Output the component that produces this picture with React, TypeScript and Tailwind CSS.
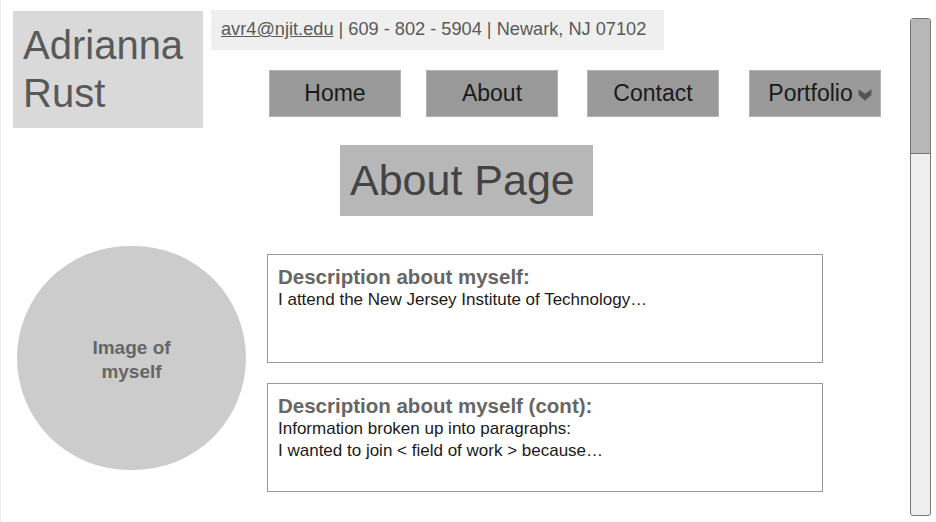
import React from "react";

const navItems = [
  { label: "Home", gap: "" },
  { label: "About", gap: "ml-[25px]" },
  { label: "Contact", gap: "ml-[29px]" },
  { label: "Portfolio", gap: "ml-[30px]" },
];

const NavButton: React.FC<{ label: string; gap: string }> = ({ label, gap }) => (
  <div
    className={`flex h-[47px] w-[132px] items-center justify-center border border-[#b3b3b3] bg-[#999999] text-[23px] text-[#1a1a1a] ${gap}`}
  >
    <span className={label === "Portfolio" ? "ml-[10px]" : ""}>{label}</span>
    {label === "Portfolio" && (
      <svg width="14" height="14" viewBox="0 0 12 12" className="ml-[5px] mt-[3px]">
        {/* thick down chevron */}
        <path d="M0.5 1 L6 5 L11.5 1 L11.5 6 L6 11 L0.5 6 Z" fill="#555555" />
      </svg>
    )}
  </div>
);

const InfoBox: React.FC<{ title: string; lines: string[] }> = ({ title, lines }) => (
  <div className="h-[109px] w-[556px] border border-[#999999] px-[10px] pt-[10px]">
    <h2 className="text-[20.5px] font-bold leading-[24px] text-[#666666]">{title}</h2>
    {lines.map((line) => (
      <p key={line} className="text-[17px] leading-[22px] text-[#1a1a1a]">
        {line}
      </p>
    ))}
  </div>
);

const App: React.FC = () => {
  return (
    <div
      className="flex h-[522px] w-[936px] overflow-hidden border-l border-[#eeeeee] bg-white"
      style={{ fontFamily: '"Liberation Sans", Arial, sans-serif' }}
    >
      <div className="flex-1">
        {/* Header */}
        <div className="flex items-start">
          <div className="ml-[12px] mt-[11px] h-[117px] w-[190px] bg-[#d9d9d9] px-[10px] pt-[10px] text-[40px] leading-[48px] text-[#595959]">
            Adrianna
            <br />
            Rust
          </div>
          <div className="ml-[8px] mt-[10px] flex flex-col">
            <div className="flex h-[40px] w-[453px] items-center bg-[#efefef] px-[10px] text-[18.2px] text-[#595959]">
              <span className="underline">avr4@njit.edu</span>
              <span className="whitespace-pre"> | 609 - 802 - 5904 | Newark, NJ 07102</span>
            </div>
            <div className="ml-[58px] mt-[20px] flex">
              {navItems.map((item) => (
                <NavButton key={item.label} label={item.label} gap={item.gap} />
              ))}
            </div>
          </div>
        </div>

        {/* Title */}
        <div className="ml-[339px] mt-[17px] flex h-[71px] w-[253px] items-center bg-[#b7b7b7] px-[10px] text-[43px] text-[#434343]">
          About Page
        </div>

        {/* Body */}
        <div className="mt-[30px] flex items-start">
          <div className="ml-[16px] flex h-[224px] w-[229px] items-center justify-center rounded-full bg-[#cccccc] pt-[4px] text-center text-[19px] font-bold leading-[24px] text-[#666666]">
            Image of
            <br />
            myself
          </div>
          <div className="ml-[21px] mt-[8px] flex flex-col gap-[20px]">
            <InfoBox title="Description about myself:" lines={["I attend the New Jersey Institute of Technology…"]} />
            <InfoBox
              title="Description about myself (cont):"
              lines={["Information broken up into paragraphs:", "I wanted to join < field of work > because…"]}
            />
          </div>
        </div>
      </div>

      {/* Scrollbar */}
      <div className="mr-[5px] mt-[18px] flex h-[498px] w-[21px] flex-col overflow-hidden rounded-[3px] border border-[#777777] bg-[#efefef]">
        <div className="h-[135px] border-b border-[#777777] bg-[#b7b7b7]" />
      </div>
    </div>
  );
};

export default App;
